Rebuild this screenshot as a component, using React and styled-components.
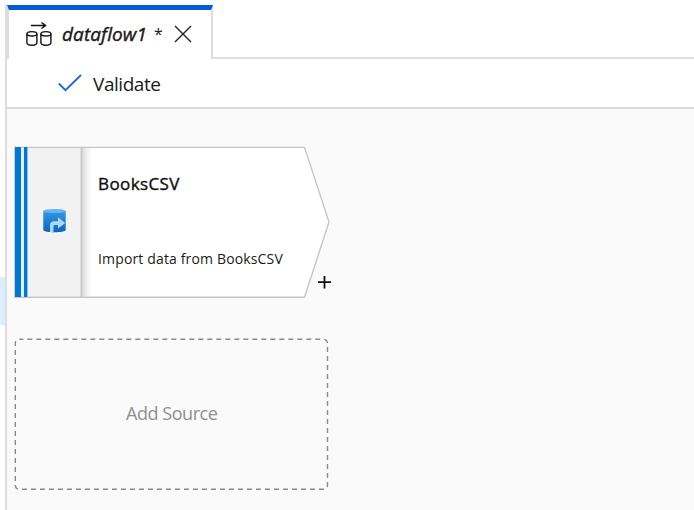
import React from "react";
import styled, { createGlobalStyle } from "styled-components";

const Global = createGlobalStyle`
  * { box-sizing: border-box; }
  body { margin: 0; background: #fff; overflow: hidden; font-family: "Open Sans", "Noto Sans", sans-serif; color: #1b1a19; }
`;
const Page = styled.div`display: flex; width: 694px; height: 510px;`;
const Gutter = styled.div`width: 5px; padding-top: 277px; flex: none;`;
const Selection = styled.div`height: 48px; background: #daeeff;`;
const Panel = styled.main`
  flex: 1; min-width: 0; display: flex; flex-direction: column;
  margin-top: 5px; border-left: 2px solid #ddd;
`;
const Tabs = styled.div`display: flex; height: 54px; flex: none;`;
const Tab = styled.div`
  width: 206px; display: flex; align-items: flex-start; padding: 0 0 0 16px;
  border: 2px solid #ddd; border-top: 5px solid #015cda; border-bottom: 0;
`;
const TabRest = styled.div`flex: 1; border-bottom: 2px solid #e0e0e0;`;
const Icon = styled.svg`display: block; flex: none; fill: none;`;
const TabTitle = styled.span`
  display: flex; width: 102px; margin: 10px 10px 0 9px; white-space: nowrap;
  font-size: 19px; line-height: 28px; font-style: italic; font-weight: 400;
  -webkit-text-stroke: 0.4px currentColor;
  letter-spacing: ${(p) => p.$track}px;
`;
const TabIcon = styled(Icon)`margin-top: 11px;`;
const CloseIcon = styled(Icon)`margin-top: 15px;`;
const Star = styled.span`
  font-style: normal; font-size: 16px; margin-left: 7px;
  -webkit-text-stroke: 0;
`;
const Toolbar = styled.div`
  height: 50px; flex: none; display: flex; align-items: center;
  padding: 0 0 0 51px; border-bottom: 2px solid #ddd;
`;
const Action = styled.span`
  margin-left: 11px; font-size: 19px; line-height: 28px; padding-top: 1px;
  letter-spacing: ${(p) => p.$track}px;
`;
const Canvas = styled.section`
  flex: 1; background: #fafafa; display: flex; flex-direction: column;
  align-items: flex-start; gap: 40px; padding: 37px 0 0 7px;
`;
const Node = styled.div`position: relative; width: 316px; height: 152px; display: flex;`;
const Shape = styled.svg`position: absolute; inset: 0; overflow: visible; fill: none;`;
const NodeSide = styled.div`
  position: relative; width: 68px; padding: 61px 0 0 28px;
`;
const NodeText = styled.div`
  position: relative; display: flex; flex-direction: column; justify-content: space-between;
  padding: 26px 0 29px 16px; white-space: nowrap;
`;
const Name = styled.span`
  font-size: 17px; line-height: 24px; color: #111;
  -webkit-text-stroke: 0.4px currentColor;
  letter-spacing: ${(p) => p.$track}px;
`;
const Detail = styled.span`font-size: 14px; line-height: 20px; letter-spacing: ${(p) => p.$track}px; color: #1b1a19;`;
const AddLabel = styled.span`
  margin: 61px 0 0 112px; font-size: 18px; line-height: 28px; color: #8f8f8f;
  letter-spacing: ${(p) => p.$track}px; white-space: nowrap;
`;
const Plus = styled(Icon)`position: absolute; left: 303px; top: 129px;`;

const Cylinders = () => (
  <TabIcon width="28" height="26" stroke="#111" strokeWidth="1.4">
    <path d="M6 4.5H20.5M16.5 1.5l4 3-4 3" strokeWidth="1.5" />
    {[1.9, 15.9].map((x) => (
      <g key={x} transform={`translate(${x} 0)`}>
        <ellipse cx="5" cy="12.8" rx="5" ry="2.2" />
        <path d="M0 12.8v8.7C0 24.2 2.5 24.2 5 24.2S10 24.2 10 21.5V12.8" />
      </g>
    ))}
  </TabIcon>
);

const SourceIcon = () => (
  <Icon width="25" height="27">
    <defs>
      <linearGradient id="drum" x1="0" y1="0" x2="0" y2="1">
        <stop offset="0" stopColor="#3398e3" />
        <stop offset="1" stopColor="#0b64bd" />
      </linearGradient>
    </defs>
    <path d="M1.3 4V23C1.3 26 23.7 26 23.7 23V4Z" fill="url(#drum)" />
    <ellipse cx="12.5" cy="4" rx="11.2" ry="2" fill="#61b7f2" />
    <path d="M8 25V19C8 15.7 9.3 14.3 12.5 14.3H16V10.3L23.2 16 16 21.5V18.1H13C11.8 18.1 11.5 18.5 11.5 19.7V25.1Z" fill="#add7f6" />
  </Icon>
);

export default function App() {
  return (
    <>
      <Global />
      <Page>
        <Gutter><Selection /></Gutter>
        <Panel>
          <Tabs>
            <Tab>
              <Cylinders />
              <TabTitle $track={0.1}>dataflow1<Star>*</Star></TabTitle>
              <CloseIcon width="18" height="18" stroke="#222" strokeWidth="1.4">
                <path d="M1 1L17 17M17 1L1 17" />
              </CloseIcon>
            </Tab>
            <TabRest />
          </Tabs>
          <Toolbar>
            <Icon width="24" height="18" stroke="#1769df" strokeWidth="1.8">
              <path d="M.8 9.5L7.5 16.2 23 1" />
            </Icon>
            <Action $track={-0.45}>Validate</Action>
          </Toolbar>
          <Canvas>
            <Node>
              <Shape width="316" height="152">
                <defs>
                  <linearGradient id="shade">
                    <stop offset="0" stopColor="#d9d9d9" />
                    <stop offset=".45" stopColor="#efefef" />
                    <stop offset="1" stopColor="#fff" />
                  </linearGradient>
                </defs>
                <path d="M1 1.4H290.5L315 76 290.5 151.2H1Z" fill="#fff" />
                <path d="M1 1.4H67V151H1Z" fill="#f2f2f2" />
                <path d="M68 2H78V150.5H68Z" fill="url(#shade)" />
                <path d="M67.3 1V151" stroke="#c8c8c8" strokeWidth="1.5" />
                <path d="M7 1H10V151H7Z" fill="#e1f0fb" />
                <path d="M.8 1.4H290.5L315 76 290.5 151.2H.8Z" stroke="#c6c6c6" strokeWidth="1.4" />
                <path d="M1 1H7V151H1ZM10 1H13.4V151H10Z" fill="#0078d4" />
              </Shape>
              <NodeSide><SourceIcon /></NodeSide>
              <NodeText>
                <Name $track={0.4}>BooksCSV</Name>
                <Detail $track={0.15}>Import data from BooksCSV</Detail>
              </NodeText>
              <Plus width="15" height="15" stroke="#111" strokeWidth="1.8">
                <path d="M1 7.2H14M7.5 1V13.5" />
              </Plus>
            </Node>
            <Node>
              <Shape width="316" height="152">
                <rect x="1.3" y="1.3" width="312.2" height="150" rx="4" stroke="#8a8a8a" strokeWidth="1.4" strokeDasharray="5 4" strokeDashoffset="1" />
              </Shape>
              <AddLabel $track={-0.45}>Add Source</AddLabel>
            </Node>
          </Canvas>
        </Panel>
      </Page>
    </>
  );
}
